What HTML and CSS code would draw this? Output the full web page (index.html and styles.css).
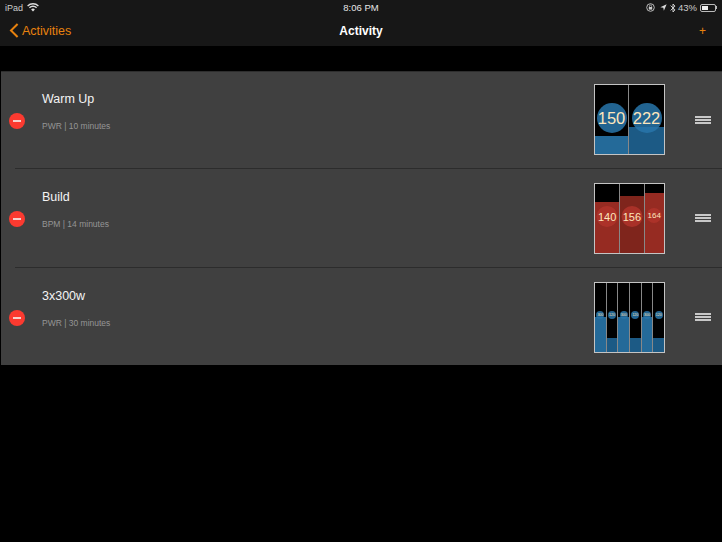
FILE: index.html
```html
<!DOCTYPE html>
<html>
<head>
    <link rel="stylesheet" href="styles.css">
</head>
<body>

    <div class="topbar">
        <div class="status">
            <div class="status-left">
                <span>iPad</span>
                <svg class="wifi" width="12" height="9" viewBox="0 0 12 9">
                    <path d="M0.6 3 A7.6 7.6 0 0 1 11.4 3" fill="none" stroke="#ddd" stroke-width="1.3"/>
                    <path d="M2.4 4.8 A5 5 0 0 1 9.6 4.8" fill="none" stroke="#ddd" stroke-width="1.3"/>
                    <path d="M4.1 6.5 A2.6 2.6 0 0 1 7.9 6.5 L6 8.6 Z" fill="#ddd"/>
                </svg>
            </div>
            <div class="status-time">8:06 PM</div>
            <div class="status-right">
                <svg width="9" height="9" viewBox="0 0 9 9">
                    <circle cx="4.5" cy="4.5" r="3.8" fill="none" stroke="#ccc" stroke-width="0.9"/>
                    <rect x="2.8" y="4" width="3.4" height="2.6" fill="#ccc"/>
                    <path d="M3.4 4 V3.2 A1.1 1.1 0 0 1 5.6 3.2 V4" fill="none" stroke="#ccc" stroke-width="0.7"/>
                </svg>
                <svg class="arrow" width="7" height="7" viewBox="0 0 8 8">
                    <path d="M7.6 0.4 L0.4 3.6 L3.8 4.2 L4.4 7.6 Z" fill="#ddd"/>
                </svg>
                <svg class="bt" width="6" height="10" viewBox="0 0 6 10">
                    <path d="M0.6 2.6 L5 6.9 L3 9 V1 L5 3.1 L0.6 7.4" fill="none" stroke="#ddd" stroke-width="0.9"/>
                </svg>
                <span class="battery-pct">43%</span>
                <div class="battery"><div class="battery-level"></div></div>
                <div class="battery-tip"></div>
            </div>
        </div>
        <div class="nav">
            <div class="nav-back">
                <svg width="10" height="15" viewBox="0 0 10 15">
                    <path d="M8.6 1 L2 7.5 L8.6 14" fill="none" stroke="#e8820e" stroke-width="2"/>
                </svg>
                <span>Activities</span>
            </div>
            <div class="nav-title">Activity</div>
            <div class="nav-add">+</div>
        </div>
    </div>

    <div class="list">

        <div class="row first">
            <div class="remove"></div>
            <div class="row-body">
                <div class="row-text">
                    <div class="row-title">Warm Up</div>
                    <div class="row-sub">PWR | 10 minutes</div>
                </div>
                <div class="thumb">
                    <div class="col" style="flex-basis: 35px">
                        <div class="fill blue" style="height: 18px"></div>
                        <div class="dot blue-dot big">150</div>
                    </div>
                    <div class="col" style="flex-basis: 36px">
                        <div class="fill blue dark" style="height: 27px"></div>
                        <div class="dot blue-dot big">222</div>
                    </div>
                </div>
                <div class="handle"><i></i><i></i><i></i></div>
            </div>
        </div>

        <div class="row middle">
            <div class="remove"></div>
            <div class="row-body">
                <div class="row-text">
                    <div class="row-title">Build</div>
                    <div class="row-sub">BPM | 14 minutes</div>
                </div>
                <div class="thumb">
                    <div class="col" style="flex-basis: 26px">
                        <div class="fill red" style="height: 51px"></div>
                        <div class="dot red-dot mid">140</div>
                    </div>
                    <div class="col" style="flex-basis: 25px">
                        <div class="fill red dark" style="height: 57px"></div>
                        <div class="dot red-dot mid">156</div>
                    </div>
                    <div class="col" style="flex-basis: 20px">
                        <div class="fill red" style="height: 60px"></div>
                        <div class="dot red-dot small">164</div>
                    </div>
                </div>
                <div class="handle"><i></i><i></i><i></i></div>
            </div>
        </div>

        <div class="row">
            <div class="remove"></div>
            <div class="row-body">
                <div class="row-text">
                    <div class="row-title">3x300w</div>
                    <div class="row-sub">PWR | 30 minutes</div>
                </div>
                <div class="thumb">
                    <div class="col"><div class="fill blue" style="height: 35px"></div><div class="dot blue-dot tiny">300</div></div>
                    <div class="col"><div class="fill blue dark" style="height: 14px"></div><div class="dot blue-dot tiny">120</div></div>
                    <div class="col"><div class="fill blue" style="height: 35px"></div><div class="dot blue-dot tiny">300</div></div>
                    <div class="col"><div class="fill blue dark" style="height: 14px"></div><div class="dot blue-dot tiny">120</div></div>
                    <div class="col"><div class="fill blue" style="height: 35px"></div><div class="dot blue-dot tiny">300</div></div>
                    <div class="col"><div class="fill blue dark" style="height: 14px"></div><div class="dot blue-dot tiny">120</div></div>
                </div>
                <div class="handle"><i></i><i></i><i></i></div>
            </div>
        </div>

    </div>

</body>
</html>
```

FILE: styles.css
```css
body {
    font-family: "Liberation Sans", Arial, sans-serif;
    background-color: #000;
    color: #fff;
    margin: 0;
    padding: 0;
}

.topbar {
    background-color: #171717;
    height: 46px;
}

.status {
    height: 15px;
    display: flex;
    justify-content: space-between;
    align-items: center;
    position: relative;
    padding: 0 5px 0 5px;
    font-size: 9px;
    color: #ccc;
}

.status-left {
    display: flex;
    align-items: center;
    gap: 4px;
}

.status-time {
    position: absolute;
    left: 0;
    right: 0;
    text-align: center;
    font-size: 9.5px;
    color: #e6e6e6;
}

.status-right {
    display: flex;
    align-items: center;
}

.arrow {
    margin-left: 5px;
}

.bt {
    margin-left: 3px;
}

.battery-pct {
    margin-left: 2px;
    font-size: 9.5px;
}

.battery {
    width: 16px;
    height: 8px;
    box-sizing: border-box;
    border: 1px solid #bbb;
    border-radius: 2px;
    margin-left: 3px;
    padding: 1px;
}

.battery-level {
    width: 6px;
    height: 4px;
    background-color: #eee;
}

.battery-tip {
    width: 1px;
    height: 3px;
    background-color: #bbb;
}

.nav {
    height: 31px;
    display: flex;
    align-items: center;
    justify-content: space-between;
    position: relative;
    padding: 0 16px 0 9px;
}

.nav-back {
    display: flex;
    align-items: center;
    gap: 3px;
    color: #e8820e;
    font-size: 12.5px;
}

.nav-title {
    position: absolute;
    left: 0;
    right: 0;
    text-align: center;
    font-size: 12px;
    font-weight: bold;
}

.nav-add {
    color: #e8820e;
    font-size: 12px;
    margin-top: 1px;
}

.list {
    margin: 25px 0 0 1px;
    background-color: #404040;
    border-top: 1px solid #2e2e2e;
    height: 293px;
}

.row {
    height: 97px;
    display: flex;
    position: relative;
}

.row.middle {
    height: 99px;
}

.remove {
    position: absolute;
    left: 8px;
    top: 42px;
    width: 16px;
    height: 16px;
    border-radius: 50%;
    background-color: #fb3a30;
}

.first .remove {
    top: 41px;
}

.remove::after {
    content: "";
    position: absolute;
    left: 4px;
    right: 4px;
    top: 7px;
    height: 2px;
    background-color: #f6d0cc;
}

.row-body {
    flex: 1;
    margin-left: 14px;
    padding: 14px 11px 0 27px;
    border-bottom: 1px solid #2c2c2c;
    display: flex;
    align-items: flex-start;
}

.first .row-body {
    padding-top: 12px;
}

.row:last-child .row-body {
    border-bottom: none;
}

.row-text {
    flex: 1;
}

.row-title {
    font-size: 12.5px;
    line-height: 30px;
    color: #f4f4f4;
    margin-top: -1px;
}

.first .row-title {
    margin-top: 0;
}

.row-sub {
    font-size: 8.5px;
    line-height: 12px;
    margin-top: 6px;
    color: #959595;
}

.thumb {
    width: 71px;
    height: 71px;
    box-sizing: border-box;
    border: 1px solid #c4c4c4;
    background-color: #000;
    display: flex;
}

.col {
    flex: 1 1 0;
    box-sizing: border-box;
    position: relative;
    display: flex;
    flex-direction: column;
    justify-content: flex-end;
    border-right: 1px solid #888;
}

.col:last-child {
    border-right: none;
}

.fill.blue {
    background-color: #246a99;
}

.fill.blue.dark {
    background-color: #1c5a85;
}

.fill.red {
    background-color: #962b22;
}

.fill.red.dark {
    background-color: #7f251c;
}

.dot {
    position: absolute;
    left: 50%;
    border-radius: 50%;
    transform: translateX(-50%);
    display: flex;
    align-items: center;
    justify-content: center;
    color: #fde6bd;
}

.blue-dot {
    background-color: rgba(40, 118, 170, 0.85);
}

.red-dot {
    background-color: rgba(176, 52, 42, 0.85);
}

.big {
    width: 30px;
    height: 30px;
    top: 18px;
    font-size: 16.5px;
}

.mid {
    width: 21px;
    height: 21px;
    top: 22px;
    font-size: 11px;
}

.small {
    width: 15px;
    height: 15px;
    top: 24px;
    font-size: 8px;
}

.tiny {
    width: 8px;
    height: 8px;
    top: 28px;
    font-size: 3.5px;
}

.handle {
    width: 16px;
    margin: 31px 0 0 30px;
    display: flex;
    flex-direction: column;
    gap: 1.5px;
}

.first .handle {
    margin-top: 32px;
}

.handle i {
    display: block;
    height: 1.5px;
    background-color: #c8c8c8;
}
```
